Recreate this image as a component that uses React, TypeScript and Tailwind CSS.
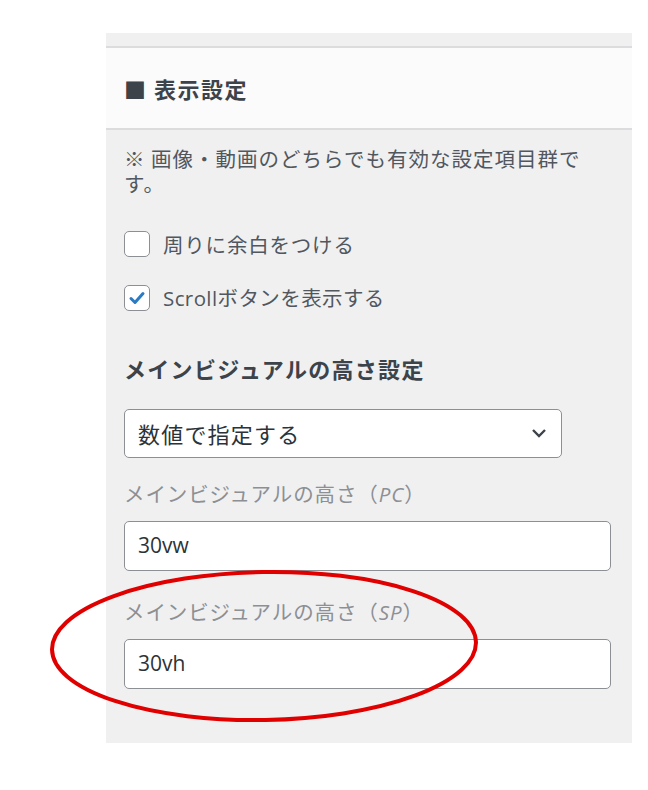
import React from "react";

const font = { fontFamily: '"Noto Sans CJK JP", "Open Sans", sans-serif' } as React.CSSProperties;
const latinFont = '"Open Sans", "Noto Sans CJK JP", sans-serif';

function Checkbox({ checked }: { checked?: boolean }) {
  return (
    <span className="flex h-[26px] w-[26px] shrink-0 items-center justify-center rounded-[5px] border border-[#8c8f94] bg-white">
      {checked && (
        <svg width="18" height="18" viewBox="0 0 18 18">
          <path d="M3 9.5 L7 13.5 L15 4.5" fill="none" stroke="#2a7ac4" strokeWidth="3" strokeLinecap="round" strokeLinejoin="round" />
        </svg>
      )}
    </span>
  );
}

export default function App() {
  return (
    <div className="relative h-[790px] w-[648px] bg-white" style={font}>
      <div className="pt-[33px] pl-[106px] pr-[16px]">
        <div className="flex flex-col bg-[#f0f0f1]">
          <div className="h-[15px] border-b-2 border-[#dcdcde]" />
          <div className="flex h-[82px] items-center border-b-2 border-[#dcdcde] bg-[#fbfbfb] px-[18px]">
            <span className="text-[22px] font-bold tracking-[1.5px] text-[#3c434a]">■ 表示設定</span>
          </div>
          <div className="flex flex-col pl-[18px] pr-[21px] pb-[54px]">
            <p className="mt-[16px] text-[20.5px] leading-[25px] tracking-[1px] text-[#50575e]">
              ※ 画像・動画のどちらでも有効な設定項目群です。
            </p>
            <label className="mt-[33px] flex items-center gap-[13px]">
              <Checkbox />
              <span className="text-[20.5px] tracking-[0.8px] text-[#50575e]">周りに余白をつける</span>
            </label>
            <label className="mt-[22px] flex items-center gap-[13px]">
              <Checkbox checked />
              <span className="text-[20.5px] tracking-[0.4px] text-[#50575e]">
                <span style={{ fontFamily: latinFont }}>Scroll</span>ボタンを表示する
              </span>
            </label>
            <h3 className="mt-[39px] text-[22px] font-bold leading-[30px] tracking-[1.3px] text-[#3c434a]">
              メインビジュアルの高さ設定
            </h3>
            <div className="mt-[26px] flex h-[49px] w-[438px] items-center justify-between rounded-[5px] border border-[#8c8f94] bg-white pl-[13px] pr-[12px]">
              <span className="text-[22px] tracking-[1.2px] text-[#2c3338]">数値で指定する</span>
              <svg width="20" height="20" viewBox="0 0 20 20">
                <path d="M4 7 L10 13 L16 7" fill="none" stroke="#3c434a" strokeWidth="2.4" />
              </svg>
            </div>
            <div className="mt-[21px] text-[20.5px] leading-[28px] tracking-[0.9px] text-[#8c8f94]">
              メインビジュアルの高さ（<i style={{ fontFamily: latinFont }}>PC</i>）
            </div>
            <div className="mt-[13px] flex h-[50px] items-center rounded-[5px] border border-[#8c8f94] bg-white px-[13px]">
              <span className="text-[21px] text-[#2c3338]" style={{ fontFamily: latinFont }}>30vw</span>
            </div>
            <div className="mt-[26px] text-[20.5px] leading-[28px] tracking-[0.9px] text-[#8c8f94]">
              メインビジュアルの高さ（<i style={{ fontFamily: latinFont }}>SP</i>）
            </div>
            <div className="mt-[13px] flex h-[50px] items-center rounded-[5px] border border-[#8c8f94] bg-white px-[13px]">
              <span className="text-[21px] text-[#2c3338]" style={{ fontFamily: latinFont }}>30vh</span>
            </div>
          </div>
        </div>
      </div>
      <svg className="pointer-events-none absolute left-0 top-0" width="648" height="790">
        <ellipse cx="264" cy="646" rx="212" ry="74" fill="none" stroke="#e00000" strokeWidth="4" transform="rotate(-1 264 646)" />
      </svg>
    </div>
  );
}
